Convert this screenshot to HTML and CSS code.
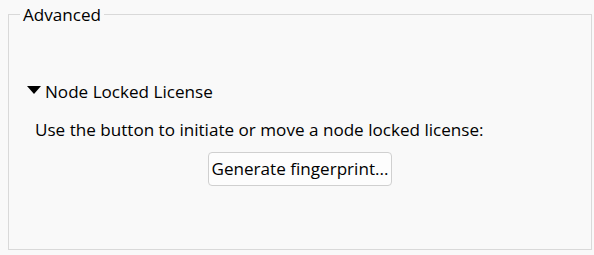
FILE: index.html
```html
<!DOCTYPE html>
<html>
<head>
<meta charset="utf-8">
<link rel="stylesheet" href="styles.css">
</head>
<body>
<fieldset class="group">
  <legend class="group-title">Advanced</legend>
  <div class="section">
    <div class="section-header">
      <span class="caret"></span>
      <span class="section-title">Node Locked License</span>
    </div>
    <div class="section-body">
      <p class="hint">Use the button to initiate or move a node locked license:</p>
      <div class="actions">
        <button class="btn" type="button">Generate fingerprint...</button>
      </div>
    </div>
  </div>
</fieldset>
</body>
</html>
```
FILE: styles.css
```css
html, body {
  margin: 0;
  padding: 0;
  background: #f9f9f9;
}
body {
  font-family: "Open Sans", "Noto Sans", sans-serif;
  font-size: 17.1px;
  line-height: 24px;
  color: #000;
}
.group {
  margin: 2px 2px 0 8px;
  padding: 0 0 63px 0;
  border: 1px solid #d9d9d9;
  min-width: 0;
}
.group-title {
  margin-left: 11px;
  padding: 0 3px;
  line-height: 25px;
}
.section {
  margin-top: 53px;
}
.section-header {
  display: flex;
  align-items: flex-start;
  padding-left: 18px;
}
.caret {
  width: 0;
  height: 0;
  margin-top: 6px;
  margin-right: 4px;
  border-left: 7px solid transparent;
  border-right: 7px solid transparent;
  border-top: 8px solid #000;
}
.section-body {
  padding-top: 14px;
}
.hint {
  margin: 0;
  padding-left: 26px;
}
.actions {
  display: flex;
  justify-content: center;
  margin-top: 10px;
}
.btn {
  font: inherit;
  color: #000;
  height: 34px;
  padding: 0 3px;
  background: #fdfdfd;
  border: 1px solid #d0d0d0;
  border-radius: 4px;
}
```
